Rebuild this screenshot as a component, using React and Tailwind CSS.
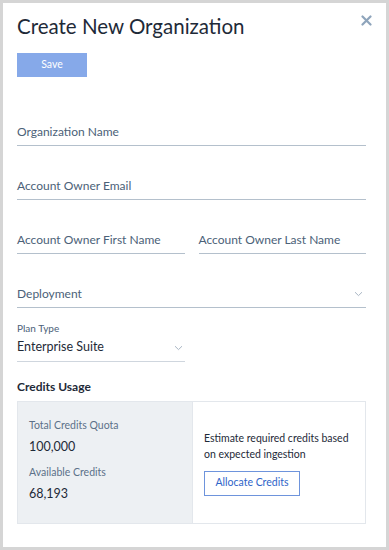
import React from 'react';

const font = { fontFamily: 'Lato, "Noto Sans", sans-serif' };

const Chevron = ({ className = '' }) => (
  <svg className={className} width="9" height="6" viewBox="0 0 9 6" fill="none">
    <path d="M1 1.2L4.5 4.6L8 1.2" stroke="#a9b6c4" strokeWidth="1" />
  </svg>
);

const Field = ({ label, className = '', chevron = false }) => (
  <div className={`flex items-center justify-between h-[28px] border-b border-[#b4c0cc] ${className}`}>
    <span className="text-[12px] leading-[16px] text-[#4b6178]">{label}</span>
    {chevron && <Chevron className="mr-[3px]" />}
  </div>
);

export default function App() {
  return (
    <div className="w-[389px] h-[550px] bg-[#d5d5d5] p-[3px]" style={font}>
      <div className="relative h-full bg-white pl-[14px] pr-[20px] pt-[9px]">
        <h1 className="text-[20.5px] leading-[28px] text-[#1e2a38] font-normal">Create New Organization</h1>
        <button className="absolute right-[14px] top-[12px] text-[#8ea4bb]">
          <svg width="11" height="11" viewBox="0 0 11 11">
            <path d="M1.5 1.5L9.5 9.5M9.5 1.5L1.5 9.5" stroke="currentColor" strokeWidth="2.2" strokeLinecap="round" />
          </svg>
        </button>

        <button className="mt-[13px] w-[70px] h-[24px] bg-[#86a9e9] text-white text-[10.5px]">Save</button>

        <Field label="Organization Name" className="mt-[41px]" />
        <Field label="Account Owner Email" className="mt-[26px]" />
        <div className="mt-[26px] flex gap-[14px]">
          <Field label="Account Owner First Name" className="flex-1" />
          <Field label="Account Owner Last Name" className="flex-1" />
        </div>
        <Field label="Deployment" className="mt-[26px]" chevron />

        <div className="mt-[14px] w-[168px]">
          <div className="text-[10px] leading-[12px] text-[#4b6178]">Plan Type</div>
          <div className="flex items-center justify-between h-[28px] border-b border-[#cfd6de]">
            <span className="text-[12.5px] text-[#1e2a38]">Enterprise Suite</span>
            <Chevron className="mr-[2px]" />
          </div>
        </div>

        <div className="mt-[17px] text-[12px] leading-[16px] font-bold text-[#1e2a38]">Credits Usage</div>

        <div className="mt-[6px] flex h-[123px] border border-[#e3e7ec]">
          <div className="w-[174px] shrink-0 bg-[#edf0f3] pl-[11px] pt-[16px]">
            <div className="text-[10.5px] leading-[14px] text-[#5c7189]">Total Credits Quota</div>
            <div className="mt-[7px] text-[12.5px] leading-[16px] text-[#1e2a38]">100,000</div>
            <div className="mt-[10px] text-[10.5px] leading-[14px] text-[#5c7189]">Available Credits</div>
            <div className="mt-[7px] text-[12.5px] leading-[16px] text-[#1e2a38]">68,193</div>
          </div>
          <div className="flex-1 min-w-0 flex flex-col justify-center pl-[11px] border-l border-[#e3e7ec]">
            <p className="text-[10.5px] leading-[16px] text-[#1e2a38] whitespace-nowrap">
              Estimate required credits based<br />on expected ingestion
            </p>
            <button className="mt-[9px] self-start w-[96px] h-[25px] border border-[#6e94dc] text-[10.5px] text-[#2e64c8]">
              Allocate Credits
            </button>
          </div>
        </div>
      </div>
    </div>
  );
}
